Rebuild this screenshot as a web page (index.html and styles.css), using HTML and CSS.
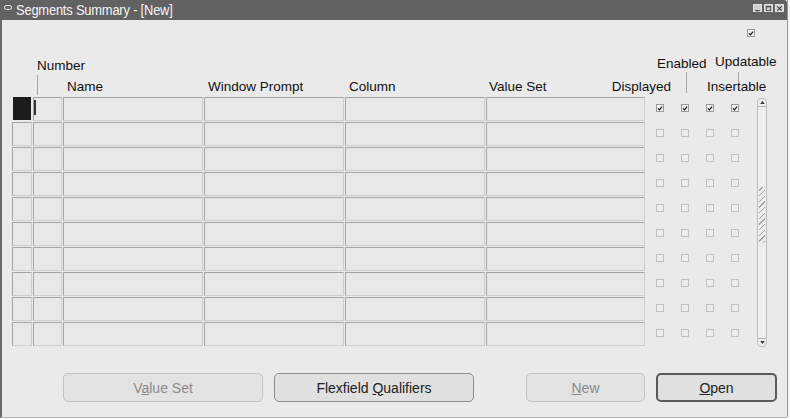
FILE: index.html
```html
<!DOCTYPE html>
<html>
<head>
<meta charset="utf-8">
<link rel="stylesheet" href="styles.css">
</head>
<body>
<div class="window">
  <div class="titlebar">
    <span class="sysicon"></span>
    <span class="title">Segments Summary - [New]</span>
    <div class="controls">
      <span class="ctl"><svg width="8" height="8" viewBox="0 0 8 8"><path d="M1.5 6.5H6.5" stroke="#444" stroke-width="1.4"/></svg></span>
      <span class="ctl"><svg width="8" height="8" viewBox="0 0 8 8"><rect x="1.5" y="1.5" width="5" height="5" fill="none" stroke="#444" stroke-width="1"/><path d="M1.5 2H6.5" stroke="#444" stroke-width="1.2"/></svg></span>
      <span class="ctl"><svg width="8" height="8" viewBox="0 0 8 8"><path d="M1.5 1.5L6.5 6.5M6.5 1.5L1.5 6.5" stroke="#444" stroke-width="1.3"/></svg></span>
    </div>
  </div>
  <div class="content">
    <div class="toprow">
      <span class="cb checked"><svg width="8" height="8" viewBox="0 0 8 8"><path d="M1.3 3.8L3.2 5.8L6.8 1.6" fill="none" stroke="#111" stroke-width="1.6"/></svg></span>
    </div>
    <div class="grid head">
      <span class="lbl number">Number</span>
      <span class="lbl enabled">Enabled</span>
      <span class="lbl updatable">Updatable</span>
      <span class="leader l-number"></span>
      <span class="leader l-enabled"></span>
      <span class="leader l-updatable"></span>
      <span class="lbl r2 c-name">Name</span>
      <span class="lbl r2 c-wp">Window Prompt</span>
      <span class="lbl r2 c-col">Column</span>
      <span class="lbl r2 c-vs">Value Set</span>
      <span class="lbl r2 c-disp">Displayed</span>
      <span class="lbl r2 c-ins">Insertable</span>
    </div>
    <div class="tablewrap">
      <div class="grid rows">
        <span class="sel current"></span><span class="cell num"><i class="caret"></i></span><span class="cell"></span><span class="cell"></span><span class="cell"></span><span class="cell"></span>
        <span class="chk"><span class="cb checked"><svg width="8" height="8" viewBox="0 0 8 8"><path d="M1.3 3.8L3.2 5.8L6.8 1.6" fill="none" stroke="#111" stroke-width="1.6"/></svg></span></span>
        <span class="chk"><span class="cb checked"><svg width="8" height="8" viewBox="0 0 8 8"><path d="M1.3 3.8L3.2 5.8L6.8 1.6" fill="none" stroke="#111" stroke-width="1.6"/></svg></span></span>
        <span class="chk"><span class="cb checked"><svg width="8" height="8" viewBox="0 0 8 8"><path d="M1.3 3.8L3.2 5.8L6.8 1.6" fill="none" stroke="#111" stroke-width="1.6"/></svg></span></span>
        <span class="chk"><span class="cb checked"><svg width="8" height="8" viewBox="0 0 8 8"><path d="M1.3 3.8L3.2 5.8L6.8 1.6" fill="none" stroke="#111" stroke-width="1.6"/></svg></span></span>

        <span class="sel"></span><span class="cell"></span><span class="cell"></span><span class="cell"></span><span class="cell"></span><span class="cell"></span>
        <span class="chk"><span class="cb"></span></span><span class="chk"><span class="cb"></span></span><span class="chk"><span class="cb"></span></span><span class="chk"><span class="cb"></span></span>

        <span class="sel"></span><span class="cell"></span><span class="cell"></span><span class="cell"></span><span class="cell"></span><span class="cell"></span>
        <span class="chk"><span class="cb"></span></span><span class="chk"><span class="cb"></span></span><span class="chk"><span class="cb"></span></span><span class="chk"><span class="cb"></span></span>

        <span class="sel"></span><span class="cell"></span><span class="cell"></span><span class="cell"></span><span class="cell"></span><span class="cell"></span>
        <span class="chk"><span class="cb"></span></span><span class="chk"><span class="cb"></span></span><span class="chk"><span class="cb"></span></span><span class="chk"><span class="cb"></span></span>

        <span class="sel"></span><span class="cell"></span><span class="cell"></span><span class="cell"></span><span class="cell"></span><span class="cell"></span>
        <span class="chk"><span class="cb"></span></span><span class="chk"><span class="cb"></span></span><span class="chk"><span class="cb"></span></span><span class="chk"><span class="cb"></span></span>

        <span class="sel"></span><span class="cell"></span><span class="cell"></span><span class="cell"></span><span class="cell"></span><span class="cell"></span>
        <span class="chk"><span class="cb"></span></span><span class="chk"><span class="cb"></span></span><span class="chk"><span class="cb"></span></span><span class="chk"><span class="cb"></span></span>

        <span class="sel"></span><span class="cell"></span><span class="cell"></span><span class="cell"></span><span class="cell"></span><span class="cell"></span>
        <span class="chk"><span class="cb"></span></span><span class="chk"><span class="cb"></span></span><span class="chk"><span class="cb"></span></span><span class="chk"><span class="cb"></span></span>

        <span class="sel"></span><span class="cell"></span><span class="cell"></span><span class="cell"></span><span class="cell"></span><span class="cell"></span>
        <span class="chk"><span class="cb"></span></span><span class="chk"><span class="cb"></span></span><span class="chk"><span class="cb"></span></span><span class="chk"><span class="cb"></span></span>

        <span class="sel"></span><span class="cell"></span><span class="cell"></span><span class="cell"></span><span class="cell"></span><span class="cell"></span>
        <span class="chk"><span class="cb"></span></span><span class="chk"><span class="cb"></span></span><span class="chk"><span class="cb"></span></span><span class="chk"><span class="cb"></span></span>

        <span class="sel"></span><span class="cell"></span><span class="cell"></span><span class="cell"></span><span class="cell"></span><span class="cell"></span>
        <span class="chk"><span class="cb"></span></span><span class="chk"><span class="cb"></span></span><span class="chk"><span class="cb"></span></span><span class="chk"><span class="cb"></span></span>
      </div>
      <div class="scrollbar">
        <span class="sb-btn up"><svg width="6" height="4" viewBox="0 0 6 4"><path d="M0 4L3 0L6 4Z" fill="#333"/></svg></span>
        <span class="sb-track"><span class="grip"></span></span>
        <span class="sb-btn down"><svg width="6" height="4" viewBox="0 0 6 4"><path d="M0 0L3 4L6 0Z" fill="#333"/></svg></span>
      </div>
    </div>
    <div class="buttons">
      <button class="btn disabled b-vs">V<u>a</u>lue Set</button>
      <button class="btn b-flex">Flexfield <u>Q</u>ualifiers</button>
      <button class="btn disabled b-new"><u>N</u>ew</button>
      <button class="btn default b-open"><u>O</u>pen</button>
    </div>
  </div>
</div>
</body>
</html>
```

FILE: styles.css
```css
* { box-sizing: border-box; }
html, body { margin: 0; padding: 0; background: #f4f4f4; }
body {
  width: 790px;
  height: 419px;
  overflow: hidden;
  font-family: "Liberation Sans", Arial, sans-serif;
  font-size: 13.5px;
  color: #111;
}
.window {
  width: 788px;
  height: 418px;
  background: #eaeaea;
  border-left: 2px solid #6b6b6b;
  border-right: 1px solid #9a9a9a;
  border-bottom: 1px solid #b5b5b5;
  border-bottom-right-radius: 3px;
  display: flex;
  flex-direction: column;
}
.titlebar {
  height: 20px;
  background: #626262;
  display: flex;
  align-items: center;
  color: #f5f5f5;
  margin-left: -2px;
  padding-left: 4px;
  border-top-right-radius: 3px;
}
.sysicon {
  width: 8px;
  height: 5px;
  border: 1px solid #eee;
  border-radius: 3px;
  margin-top: -5px;
}
.title {
  margin-left: 4px;
  font-size: 14px;
  letter-spacing: -0.2px;
  line-height: 20px;
  transform: scaleX(0.92);
  transform-origin: left center;
}
.controls {
  margin-left: auto;
  margin-right: 3px;
  display: flex;
  gap: 2px;
  margin-top: -4px;
}
.ctl {
  width: 9px;
  height: 8px;
  background: #cfcfcf;
  border: 1px solid #e2e2e2;
  display: flex;
  align-items: center;
  justify-content: center;
}
.ctl svg { width: 7px; height: 7px; }
.content {
  padding-left: 10px;
  display: flex;
  flex-direction: column;
}
.toprow { height: 33px; }
.toprow .cb { margin-top: 9px; margin-left: 735px; }

.cb {
  display: flex;
  width: 8px;
  height: 8px;
  border: 1px solid #c0c0c0;
  background: #ededed;
  align-items: center;
  justify-content: center;
}
.cb svg { width: 7px; height: 7px; }
.cb.checked { border-color: #9a9a9a; background: #f2f2f2; }

.grid {
  display: grid;
  grid-template-columns: 21px 30px 141px 141px 141px 160px 25px 25px 25px 25px;
}
.head {
  height: 44px;
  grid-template-rows: 20px 24px;
  white-space: nowrap;
}
.lbl { line-height: 16px; }
.number { grid-column: 2 / span 3; grid-row: 1; padding-left: 4px; margin-top: 5px; }
.enabled { grid-column: 7 / span 3; grid-row: 1; padding-left: 11px; margin-top: 3px; }
.updatable { grid-column: 9 / span 3; grid-row: 1; padding-left: 19px; margin-top: 1px; }
.r2 { grid-row: 2; align-self: end; margin-bottom: 2px; }
.c-name { grid-column: 3; padding-left: 4px; }
.c-wp { grid-column: 4; padding-left: 4px; }
.c-col { grid-column: 5; padding-left: 4px; }
.c-vs { grid-column: 6; padding-left: 3px; }
.c-disp { grid-column: 6 / span 2; justify-self: end; }
.c-ins { grid-column: 9 / span 3; padding-left: 11px; }
.leader { grid-row: 2; width: 1px; background: #a5a5a5; align-self: start; justify-self: start; }
.l-number { grid-column: 2; margin-left: 4px; margin-top: 2px; height: 20px; }
.l-enabled { grid-column: 8; margin-left: 15px; margin-top: -1px; height: 21px; }
.l-updatable { grid-column: 10; margin-left: 17px; margin-top: -1px; height: 10px; }

.tablewrap { display: flex; }
.rows { grid-auto-rows: 25px; }
.cell, .sel {
  margin-right: 1px;
  margin-bottom: 1px;
  border: 1px solid;
  border-color: #a4a4a4 #cecece #cecece #a4a4a4;
  background: #e8e8e8;
}
.sel.current {
  background: #1c1c1c;
  border-color: #1c1c1c;
  margin-left: 1px;
  margin-right: 2px;
  margin-bottom: 2px;
}
.num { display: flex; align-items: flex-start; }
.caret {
  width: 2px;
  height: 15px;
  background: #333;
  margin-top: 2px;
  margin-left: 0;
}
.chk { padding-left: 10px; padding-top: 7px; }

.scrollbar {
  margin-left: 11px;
  margin-top: 1px;
  width: 10px;
  height: 249px;
  border: 1px solid #bcbcbc;
  border-radius: 4px;
  background: #eeeeee;
  display: flex;
  flex-direction: column;
}
.sb-btn {
  height: 8px;
  display: flex;
  align-items: center;
  justify-content: center;
}
.sb-btn svg { width: 5px; height: 3px; }
.sb-btn.up { border-bottom: 1px solid #b0b0b0; }
.sb-btn.down { border-top: 1px solid #b0b0b0; }
.sb-track { flex: 1; display: flex; justify-content: center; }
.grip {
  margin-top: 80px;
  width: 6px;
  height: 56px;
  background: repeating-linear-gradient(135deg, transparent 0 2px, #a0a0a0 2px 3px, transparent 3px 4px);
}

.buttons {
  display: flex;
  margin-top: 26px;
  height: 29px;
}
.btn {
  font-family: "Liberation Sans", Arial, sans-serif;
  font-size: 14px;
  height: 29px;
  border: 1px solid #8c8c8c;
  border-radius: 5px;
  background: #e0e0e0;
  color: #222;
  padding: 0;
}
.btn.disabled { border-color: #c2c2c2; background: #e3e3e3; color: #8a8a8a; }
.btn.default { border: 2px solid #5a5a5a; }
.b-vs { margin-left: 51px; width: 200px; }
.b-flex { margin-left: 11px; width: 200px; }
.b-new { margin-left: 52px; width: 119px; }
.b-open { margin-left: 11px; width: 121px; }
```
